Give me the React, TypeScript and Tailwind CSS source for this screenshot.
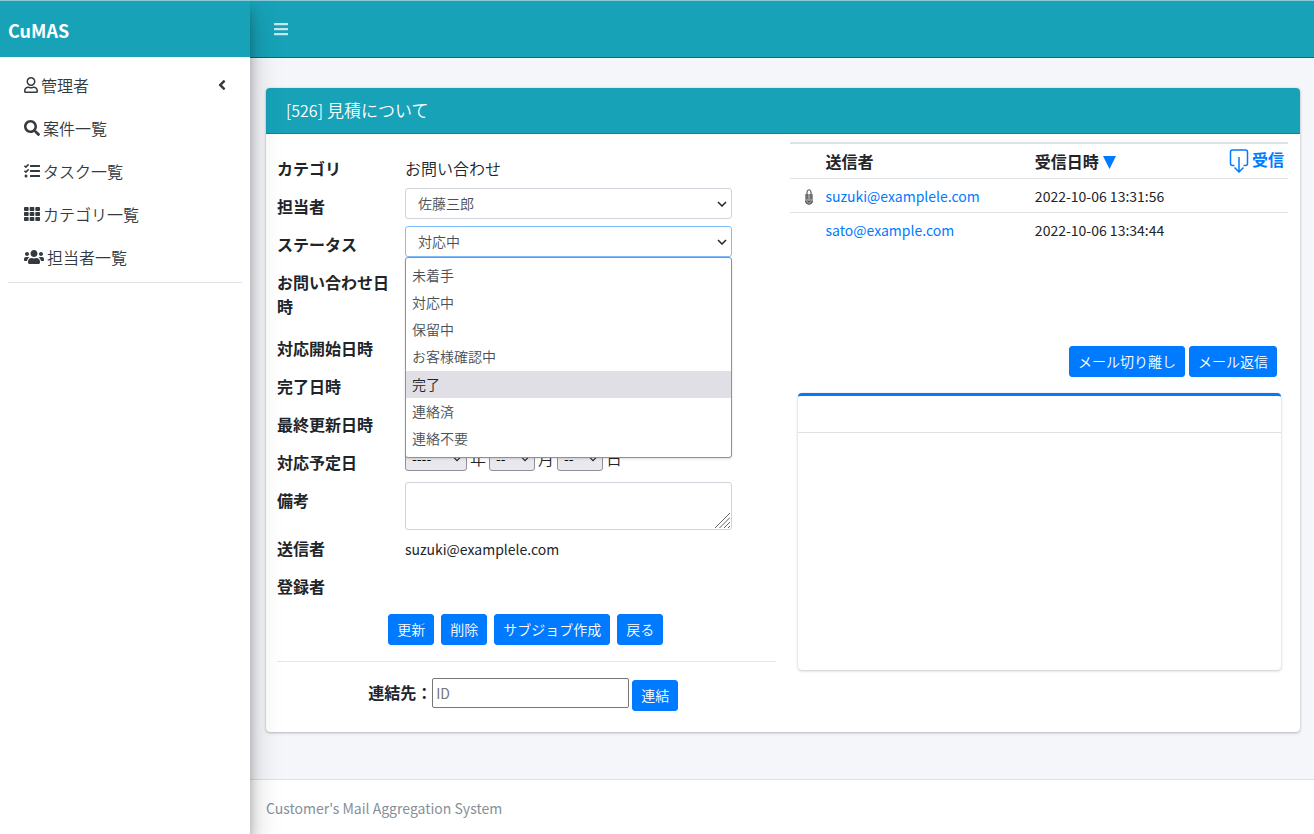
import React from 'react';
import { FaAngleLeft, FaBars, FaRegUser, FaSearch, FaTasks, FaTh, FaUsers } from 'react-icons/fa';

const menuItems = [
  { label: '管理者', icon: <FaRegUser className="w-3.5 h-4" />, hasChildren: true },
  { label: '案件一覧', icon: <FaSearch className="w-4 h-4" /> },
  { label: 'タスク一覧', icon: <FaTasks className="w-4 h-4" /> },
  { label: 'カテゴリ一覧', icon: <FaTh className="w-4 h-4" /> },
  { label: '担当者一覧', icon: <FaUsers className="w-5 h-4" /> },
];

const statuses = ['未着手', '対応中', '保留中', 'お客様確認中', '完了', '連絡済', '連絡不要'];

const mails = [
  { from: 'suzuki@examplele.com', date: '2022-10-06 13:31:56', attached: true },
  { from: 'sato@example.com', date: '2022-10-06 13:34:44', attached: false },
];

const Button: React.FC<{ children: React.ReactNode }> = ({ children }) => (
  <button
    type="button"
    className="h-[31px] rounded-[3px] border border-[#007bff] bg-[#007bff] px-2 pb-0.5 text-sm font-[350] text-white hover:bg-blue-600"
  >
    {children}
  </button>
);

interface RowProps {
  label: string;
  htmlFor?: string;
  className?: string;
  children?: React.ReactNode;
}

const Row: React.FC<RowProps> = ({ label, htmlFor, className = 'min-h-[38px]', children }) => (
  <div className={`flex ${className}`}>
    <label htmlFor={htmlFor} className="w-32 shrink-0 pt-1.5 pr-4 font-bold">
      {label}
    </label>
    <div className="min-w-0 flex-1">{children}</div>
  </div>
);

const Chevron: React.FC<{ className: string }> = ({ className }) => (
  <svg viewBox="0 0 10 6" className={className} fill="none" stroke="currentColor" strokeWidth="1.5">
    <path d="M1 1l4 4 4-4" />
  </svg>
);

interface SelectBoxProps {
  id: string;
  options: string[];
  value: string;
  border: string;
}

const SelectBox: React.FC<SelectBoxProps> = ({ id, options, value, border }) => (
  <>
    <select
      id={id}
      defaultValue={value}
      className={`block h-[31px] w-full appearance-none rounded-[3px] border bg-white px-3 pb-0.5 text-sm font-[350] text-[#495057] outline-none ${border}`}
    >
      {options.map(option => (
        <option key={option}>{option}</option>
      ))}
    </select>
    <Chevron className="pointer-events-none absolute top-[13px] right-[5px] h-1.5 w-2.5" />
  </>
);

const DateSelect: React.FC<{ label: string; empty: string; width: string }> = ({ label, empty, width }) => (
  <span className={`relative ${width}`}>
    <select
      aria-label={label}
      className="block h-6 w-full appearance-none rounded-[3px] border border-[#8f8f9d] bg-[#e9e9ed] px-1.5 pb-1 text-sm leading-5 text-black"
    >
      <option>{empty}</option>
    </select>
    <Chevron className="pointer-events-none absolute top-[9px] right-1.5 h-1.5 w-2" />
  </span>
);

const Sidebar = () => (
  <aside className="z-20 flex w-[250px] shrink-0 flex-col bg-white shadow-[0_14px_28px_rgba(0,0,0,0.25),0_10px_10px_rgba(0,0,0,0.22)]">
    <a href="#" className="flex h-[57px] items-center border-t border-[#8cc9d6] bg-[#17a2b8] px-2 pt-0.5 text-lg font-bold text-white">
      CuMAS
    </a>
    <nav className="mx-2 border-b border-[#dee2e6] pt-1.5 pb-1">
      {menuItems.map(item => (
        <a key={item.label} href="#" className="flex h-[43px] items-center px-4 font-[350] text-[#343a40]">
          {item.icon}
          <span className="ml-[3px]">{item.label}</span>
          {item.hasChildren && <FaAngleLeft className="mr-[-4px] ml-auto h-4 w-4" />}
        </a>
      ))}
    </nav>
  </aside>
);

const CaseForm = () => (
  <form className="pt-4">
    <Row label="カテゴリ">
      <p className="pt-1.5 font-[350]">お問い合わせ</p>
    </Row>
    <Row label="担当者" htmlFor="staff">
      <div className="relative mr-11">
        <SelectBox id="staff" options={['佐藤三郎']} value="佐藤三郎" border="border-[#ced4da]" />
      </div>
    </Row>
    <Row label="ステータス" htmlFor="status">
      <div className="relative mr-11">
        <SelectBox id="status" options={statuses} value="対応中" border="border-[#80bdff]" />
        {/* Opened status list */}
        <ul
          role="listbox"
          className="absolute top-full z-10 grid h-[201px] w-full auto-rows-fr rounded-[3px] border border-[#8f8f9d] bg-white py-1 text-sm font-[350] text-[#495057] shadow"
        >
          {statuses.map(status => (
            <li
              key={status}
              role="option"
              aria-selected={status === '完了'}
              className={`flex items-center px-1.5 pb-0.5 ${status === '完了' ? 'bg-[#e0dfe6] text-[#212529]' : ''}`}
            >
              {status}
            </li>
          ))}
        </ul>
      </div>
    </Row>
    <Row label="お問い合わせ日時" className="min-h-[66px]" />
    <Row label="対応開始日時" />
    <Row label="完了日時" />
    <Row label="最終更新日時" />
    <Row label="対応予定日">
      <div className="flex items-center gap-[3px] pt-0.5 font-[350]">
        <DateSelect label="年" empty="----" width="w-[62px]" />
        <span className="pb-0.5">年</span>
        <DateSelect label="月" empty="--" width="w-[46px]" />
        <span className="pb-0.5">月</span>
        <DateSelect label="日" empty="--" width="w-[46px]" />
        <span className="pb-0.5">日</span>
      </div>
    </Row>
    <Row label="備考" htmlFor="note">
      <div className="relative mr-11">
        <textarea id="note" className="block h-12 w-full resize-none rounded-[3px] border border-[#ced4da] px-2 text-sm" />
        {/* Resize grip */}
        <svg viewBox="0 0 15 15" className="pointer-events-none absolute right-0.5 bottom-0.5 h-[15px] w-[15px]" fill="none" stroke="#666">
          <path d="M0 15L15 0M4.500 15L15 4.500M9 15L15 9M13 15l2-2" />
        </svg>
      </div>
    </Row>
    <Row label="送信者">
      <p className="pt-[7px] text-sm leading-6">suzuki@examplele.com</p>
    </Row>
    <Row label="登録者" />
    <div className="mt-2 flex justify-center gap-[7px] pr-px">
      <Button>更新</Button>
      <Button>削除</Button>
      <Button>サブジョブ作成</Button>
      <Button>戻る</Button>
    </div>
    <hr className="my-4 border-black/10" />
    <div className="mb-5 flex items-start justify-center pr-1.5">
      <label htmlFor="link-id" className="pt-0.5 font-bold">
        連結先：
      </label>
      <input
        id="link-id"
        placeholder="ID"
        className="mr-[3px] h-[30px] w-[197px] rounded-xs border border-[#767676] px-[3px] text-sm placeholder:text-[#757575]"
      />
      <div className="pt-0.5">
        <Button>連結</Button>
      </div>
    </div>
  </form>
);

const MailPanel = () => (
  <div className="flex flex-col pt-2">
    <table className="w-full table-fixed border-t-2 border-[#dee2e6] text-left">
      <thead>
        <tr className="h-[35px] border-b border-[#dee2e6]">
          <th className="w-9" aria-label="添付" />
          <th className="w-[42%]">送信者</th>
          <th>
            受信日時
            <a href="#" className="ml-1 inline-block align-[-1px] text-[#007bff]" aria-label="並び替え">
              <svg viewBox="0 0 13 13" className="h-[13px] w-[13px]" fill="currentColor">
                <path d="M0 0h13L6.500 13z" />
              </svg>
            </a>
          </th>
          <th className="w-[72px] pr-1">
            <a href="#" className="flex items-start justify-end gap-[3px] text-[#007bff]">
              <svg viewBox="0 0 20 24" className="h-6 w-5" fill="none" stroke="currentColor" strokeWidth="1.500">
                <path d="M5.500 16.500H3.500Q1.500 16.500 1.500 14.500V3Q1.500 1 3.500 1H16.500Q18.500 1 18.500 3V14.500Q18.500 16.500 16.500 16.500H14.500" />
                <path d="M10 8V23M5.500 18.500L10 23L14.500 18.500" />
              </svg>
              <span className="leading-5">受信</span>
            </a>
          </th>
        </tr>
      </thead>
      <tbody className="text-sm">
        {mails.map(mail => (
          <tr key={mail.from} className="h-[34px] border-b border-[#dee2e6] last:border-0">
            <td className="pt-1">
              {mail.attached && (
                <svg viewBox="0 0 10 16" className="ml-3.5 h-4 w-2.5" fill="none">
                  <path d="M1 5h8v7q0 3-4 3t-4-3z" fill="#999" />
                  <path d="M3 10V3Q3 .8 5 .8T7 3V10M1.500 12Q2 15.300 5 15.300T8.500 12M3.500 12Q5 14 6.500 12" stroke="#444" />
                </svg>
              )}
            </td>
            <td className="pt-0.5">
              <a href="#" className="text-[#007bff]">{mail.from}</a>
            </td>
            <td colSpan={2} className="pt-0.5">{mail.date}</td>
          </tr>
        ))}
      </tbody>
    </table>

    {/* Mail actions */}
    <div className="mt-[100px] flex justify-end gap-1 pr-[11px]">
      <Button>メール切り離し</Button>
      <Button>メール返信</Button>
    </div>

    {/* Mail body */}
    <div className="mr-[7px] ml-2 mt-4 h-[277px] rounded border-t-[3px] border-[#007bff] bg-white shadow-[0_0_1px_rgba(0,0,0,0.125),0_1px_3px_rgba(0,0,0,0.2)]">
      <div className="h-[37px] border-b border-black/12" />
    </div>
  </div>
);

const App = () => {
  return (
    <div className="flex min-h-screen bg-[#f4f6f9] font-['Noto_Sans_CJK_JP',sans-serif] text-base text-[#212529]">
      <Sidebar />
      <div className="flex min-w-0 flex-1 flex-col">
        <header className="flex h-[58px] items-center border-t border-b border-t-[#8cc9d6] border-b-[#0f6674] bg-[#17a2b8] px-6">
          <button type="button" aria-label="メニュー" className="text-white/75">
            <FaBars className="h-4 w-3.5" />
          </button>
        </header>

        <main className="flex-1 pt-[30px] pr-3.5 pb-[47px] pl-4">
          <section className="rounded bg-white pb-px shadow-[0_0_1px_rgba(0,0,0,0.2),0_1px_3px_rgba(0,0,0,0.25)]">
            <h1 className="flex h-[46px] items-center rounded-t border-b border-[#138496] bg-[#17a2b8] px-5 pb-0.5 text-[17px] font-[350] text-white">
              <span className="mr-1 text-base">[526]</span>
              見積について
            </h1>
            <div className="grid grid-cols-2 gap-3.5 pr-3 pl-[11px]">
              <CaseForm />
              <MailPanel />
            </div>
          </section>
        </main>

        <footer className="border-t border-[#dee2e6] bg-white p-4 text-sm leading-6 text-[#869099]">
          Customer's Mail Aggregation System
        </footer>
      </div>
    </div>
  );
};

export default App;
